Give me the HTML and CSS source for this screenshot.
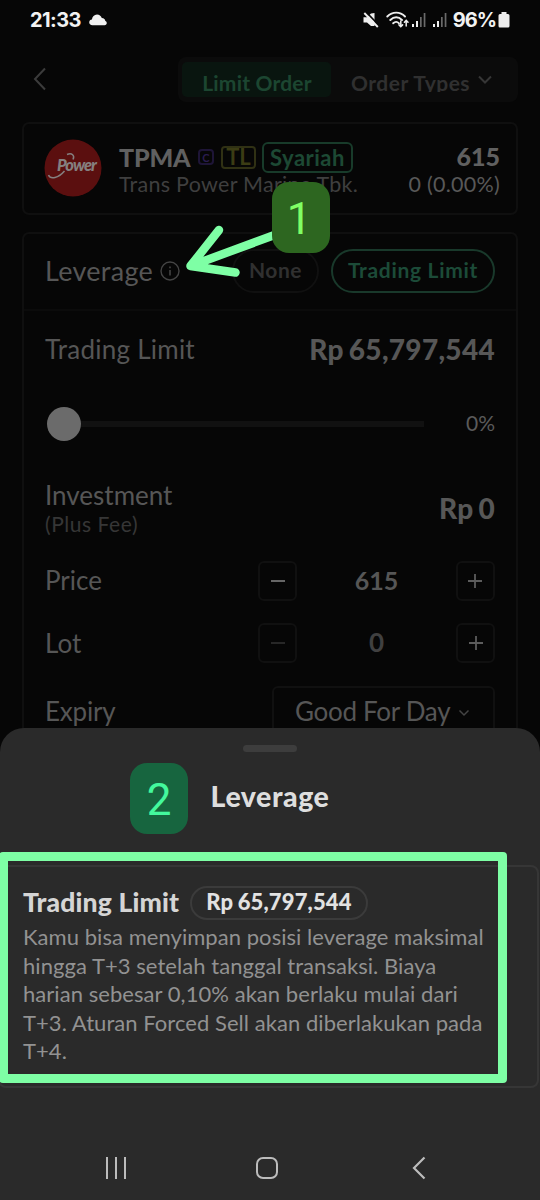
FILE: index.html
```html
<!DOCTYPE html>
<html lang="id">
<head>
<meta charset="utf-8">
<title>Leverage</title>
<link rel="stylesheet" href="styles.css">
</head>
<body>
<div class="phone">
  <header class="status">
    <span class="time">21:33</span>
    <svg class="cloud" width="18" height="12" viewBox="0 0 18 12"><path d="M3.500 11.200C1.300 11.200.2 9.900.2 8.300.2 6.700 1.400 5.600 2.900 5.500 3.300 2.800 5.200.6 8 .6c2.300 0 4 1.300 4.800 3.300C15 4 16.200 5.200 16.300 7c.9.300 1.500 1.100 1.500 2.100 0 1.200-.9 2.100-2.200 2.100z" fill="#f0f0f0"/></svg>
    <div class="signals">
      <svg width="16" height="16" viewBox="0 0 16 16"><path d="M.5 5.200H4l4-3.700 3.500-.5v13L8 14l-4-3.500H.5z" fill="#eee"/><path d="M3.500.5l12.500 13" stroke="#060606" stroke-width="1.800"/><path d="M1.300 1l13.500 14" stroke="#eee" stroke-width="1.900"/></svg>
      <svg class="wifi" width="24" height="18" viewBox="0 0 24 18" fill="none" stroke="#eee" stroke-width="1.900" stroke-linecap="round"><path d="M1.300 5.500C6.500.3 14 .3 19 5.500M4.300 9C8 5.400 12.500 5.400 16 9M7.200 12.300c2-1.900 4-1.900 5.800 0"/><path d="M14.800 10v5.500m-1.800-1.600 1.800 1.800 1.800-1.800M20.200 15V9.500m-1.800 1.700 1.800-1.800 1.800 1.800" stroke-width="1.500"/></svg>
      <svg class="bars" width="15" height="16" viewBox="0 0 15 16"><path d="M1 12h2v3H1zM5 9h2v6H5z" fill="#eee"/><path d="M9 5h1.700v10H9zM12.700 1h1.700v14h-1.700z" fill="#6a6a6a"/></svg>
      <svg class="bars second" width="15" height="16" viewBox="0 0 15 16"><path d="M1 12h2v3H1zM5 9h2v6H5z" fill="#eee"/><path d="M9 5h1.700v10H9zM12.700 1h1.700v14h-1.700z" fill="#6a6a6a"/></svg>
      <span class="percent">96%</span>
      <svg class="battery" width="12" height="16" viewBox="0 0 12 16"><path d="M3.500 0h5v2H10q1.500 0 1.500 1.500v10.500q0 1.500-1.500 1.500H2Q.5 15.500.5 14V3.500Q.5 2 2 2h1.500z" fill="#eee"/></svg>
    </div>
  </header>

  <nav class="topbar">
    <svg class="back" width="14" height="24" viewBox="0 0 14 24" fill="none" stroke="#3b3b3b" stroke-width="2"><path d="M12 1.500 2 12l10 10.500"/></svg>
    <div class="tabs">
      <div class="tab active"><span>Limit Order</span></div>
      <div class="tab"><span class="types">Order Types</span><svg width="14" height="9" viewBox="0 0 14 9" fill="none" stroke="#363636" stroke-width="2"><path d="M1 1.500 7 7.500l6-6"/></svg></div>
    </div>
  </nav>

  <section class="card stock">
    <svg class="logo" width="58" height="58" viewBox="0 0 58 58">
      <circle cx="29" cy="29" r="28.500" fill="#5b0f0f"/>
      <text class="logo-text" x="13" y="32" textLength="40">Power</text>
      <path d="M4.500 36c2 5 10 3 16-4M23 15.500c5-2 8 1 6 5" fill="none" stroke="#858080" stroke-width="1.500"/>
    </svg>
    <div class="names">
      <div class="name-row"><span class="ticker">TPMA</span><span class="tag c">C</span><span class="tag tl">TL</span><span class="tag syariah">Syariah</span></div>
      <div class="company">Trans Power Marine Tbk.</div>
    </div>
    <div class="quote"><div class="last">615</div><div class="change">0 (0.00%)</div></div>
  </section>

  <section class="card order">
    <div class="row leverage">
      <span class="label lev">Leverage</span>
      <svg class="info" width="20" height="20" viewBox="0 0 20 20" fill="none" stroke="#444"><circle cx="10" cy="10" r="9" stroke-width="1.400"/><path d="M10 9v5.500M10 5.500v1.800" stroke-width="1.600"/></svg>
      <span class="pill none">None</span>
      <span class="pill chosen">Trading Limit</span>
    </div>
    <div class="row limit"><span class="label tlim">Trading Limit</span><span class="amount">Rp 65,797,544</span></div>
    <div class="row slider"><i class="thumb"></i><i class="track"></i><span>0%</span></div>
    <div class="row invest"><div><div class="label">Investment</div><div class="fee">(Plus Fee)</div></div><span class="amount zero">Rp 0</span></div>
    <div class="row price"><span class="label">Price</span>
      <div class="stepper"><span class="btn"><svg width="14" height="14" viewBox="0 0 14 14"><path d="M0 7h14" stroke="#666" stroke-width="2"/></svg></span><b>615</b><span class="btn"><svg width="14" height="14" viewBox="0 0 14 14"><path d="M0 7h14M7 0v14" stroke="#5c5c5c" stroke-width="1.800"/></svg></span></div></div>
    <div class="row lot"><span class="label">Lot</span>
      <div class="stepper"><span class="btn"><svg width="14" height="14" viewBox="0 0 14 14"><path d="M0 7h14" stroke="#272727" stroke-width="2"/></svg></span><b class="dim">0</b><span class="btn"><svg width="14" height="14" viewBox="0 0 14 14"><path d="M0 7h14M7 0v14" stroke="#5c5c5c" stroke-width="1.800"/></svg></span></div></div>
    <div class="row expiry"><span class="label exp">Expiry</span>
      <div class="select"><span>Good For Day</span><svg width="12" height="8" viewBox="0 0 12 8" fill="none" stroke="#444" stroke-width="1.500"><path d="m1.500 1.500 4.500 4.500 4.500-4.500"/></svg></div></div>
  </section>

  <section class="sheet">
    <i class="handle"></i>
    <h1>Leverage</h1>
    <article class="detail">
      <div class="heading"><h2>Trading Limit</h2><span class="value">Rp 65,797,544</span></div>
      <p>Kamu bisa menyimpan posisi leverage maksimal<br>hingga T+3 setelah tanggal transaksi. Biaya<br>harian sebesar 0,10% akan berlaku mulai dari<br>T+3. Aturan Forced Sell akan diberlakukan pada<br>T+4.</p>
    </article>
    <footer class="sysnav">
      <svg width="22" height="22" viewBox="0 0 22 22" stroke="#bcbcbc" stroke-width="2"><path d="M2 0v22M11 0v22M20 0v22"/></svg>
      <svg class="home" width="22" height="22" viewBox="0 0 22 22" fill="none" stroke="#bcbcbc" stroke-width="2"><rect x="1" y="1" width="20" height="20" rx="6"/></svg>
      <svg width="14" height="24" viewBox="0 0 14 24" fill="none" stroke="#bcbcbc" stroke-width="2.200"><path d="M12.500 1.500 2 12l10.500 10.500"/></svg>
    </footer>
  </section>

  <svg class="arrow" width="110" height="60" viewBox="0 0 110 60" fill="none" stroke="#7effa5" stroke-width="8.500" stroke-linecap="round" stroke-linejoin="round"><path d="M100 8 10.500 41M39 5 10.500 41l45 6.500"/></svg>
  <div class="step one">1</div>
  <div class="step two">2</div>
  <div class="highlight"></div>
</div>
</body>
</html>
```
FILE: styles.css
```css
* { box-sizing: border-box; }
body { margin: 0; background: #060606; font-family: Lato, "Open Sans", sans-serif; }
svg { display: block; flex: none; }
.phone { position: relative; width: 540px; height: 1200px; overflow: hidden; background: #060606; display: flex; flex-direction: column; }

.status { height: 40px; flex: none; display: flex; align-items: center; padding: 0 30px; color: #f2f2f2; font: 700 20px Inter, sans-serif; }
.time { width: 53px; letter-spacing: -.55px; }
.cloud { margin-left: 6px; }
.signals { margin-left: auto; display: flex; align-items: center; }
.wifi { margin-left: 7px; }
.bars { margin-left: 1px; }
.second { margin-left: 6px; }
.percent { margin-left: 6px; letter-spacing: -1px; }
.battery { margin-left: 2px; }

.topbar { height: 82px; flex: none; display: flex; padding: 17px 22px 0 33px; }
.back { margin-top: 10px; }
.tabs { margin-left: auto; height: 45px; width: 340px; padding: 5px 4px; background: #0b0b0b; border-radius: 8px; display: flex; }
.tab { height: 30px; overflow: hidden; font-size: 21px; font-weight: 700; line-height: 42px; color: #303030; display: flex; white-space: nowrap; letter-spacing: .2px; }
.active { width: 149px; height: 35px; background: #09150f; color: #1c4631; border-radius: 5px; justify-content: center; padding-left: 1px; }
.tab .types { margin-left: 20px; letter-spacing: .5px; }
.tab svg { margin: 13px 0 0 8px; }

.card { margin: 0 22px; border: 2px solid #0f0f0f; border-radius: 7px; }
.stock { height: 93px; flex: none; display: flex; padding: 15px 16px 0 20px; }
.logo-text { font: italic 900 16.500px Lato, sans-serif; fill: #858080; }
.names { margin-left: 17px; width: 245px; white-space: nowrap; }
.name-row { display: flex; align-items: center; height: 36px; }
.ticker { color: #606060; font-size: 25px; font-weight: 900; letter-spacing: -.2px; width: 79px; margin-top: -1px; }
.tag { border: 2px solid; border-radius: 4px; display: flex; justify-content: center; align-items: center; font-weight: 700; }
.c { width: 16px; height: 16px; font-size: 11px; color: #2a1c50; border-color: #1e1537; }
.tl { width: 35px; height: 23px; margin-left: 7px; font-size: 22px; color: #3b3c14; border-color: #303114; line-height: 20px; }
.syariah { width: 91px; height: 31px; margin-left: 6px; font-size: 22px; letter-spacing: .5px; color: #1d4934; border-color: #183b2a; border-radius: 6px; }
.company, .change { color: #3f3f3f; font-size: 21.500px; line-height: 26px; margin-top: -4px; letter-spacing: .27px; }
.quote { margin-left: auto; text-align: right; white-space: nowrap; }
.last { color: #606060; font-size: 25px; font-weight: 900; height: 36px; line-height: 35px; }
.change { color: #585858; }

.order { margin-top: 17px; height: 520px; flex: none; padding: 0; }
.row { display: flex; align-items: center; padding: 0 21px; }
.label { color: #565656; font-size: 26px; line-height: 31px; white-space: nowrap; }
.lev { font-size: 27px; letter-spacing: .3px; width: 115px; margin-top: -1px; }
.tlim { letter-spacing: .25px; }
.exp { letter-spacing: -.2px; margin-top: -2px; }
.leverage { height: 77px; border-bottom: 2px solid #0b0b0b; padding-bottom: 2px; }
.pill { height: 44px; border: 2px solid #101010; border-radius: 22px; display: flex; justify-content: center; align-items: center; font-size: 21px; font-weight: 700; white-space: nowrap; padding-bottom: 2px; }
.none { margin-left: 52px; width: 87px; color: #303030; letter-spacing: .5px; }
.chosen { margin-left: 12px; width: 164px; color: #1c4b38; border-color: #19392b; letter-spacing: .7px; }
.limit { height: 78px; justify-content: space-between; padding-bottom: 1px; }
.amount { color: #575757; font-size: 28px; font-weight: 900; letter-spacing: .3px; word-spacing: -2px; white-space: nowrap; margin-top: -1px; }
.slider { height: 70px; padding-left: 23px; }
.thumb { width: 34px; height: 34px; border-radius: 50%; background: #6b6b6b; }
.track { width: 343px; height: 6px; background: #111; }
.slider span { margin-left: auto; color: #5a5a5a; font-size: 21px; padding-bottom: 3px; }
.invest { height: 90px; justify-content: space-between; }
.invest .label { line-height: 30px; margin-top: 10px; }
.fee { color: #363636; font-size: 21px; line-height: 28px; letter-spacing: .55px; }
.zero { margin-top: 8px; }
.price { height: 63px; }
.lot { height: 62px; }
.price, .lot, .expiry { justify-content: space-between; }
.stepper { width: 237px; display: flex; align-items: center; justify-content: space-between; color: #565656; font-size: 25px; }
.stepper b { margin-top: -2px; }
.stepper .dim { color: #404040; font-size: 26px; }
.btn { width: 39px; height: 40px; border: 2px solid #101010; border-radius: 6px; display: grid; place-items: center; }
.expiry { height: 76px; }
.select { width: 223px; height: 53px; border: 2px solid #101010; border-radius: 6px; display: flex; align-items: center; padding: 0 0 2px 21px; color: #565656; font-size: 26px; letter-spacing: -.3px; white-space: nowrap; }
.select svg { margin: 4px 0 0 8px; }

.sheet { position: absolute; left: 0; top: 728px; width: 540px; height: 472px; background: #2a2a2a; border-radius: 24px 24px 0 0; display: flex; flex-direction: column; }
.handle { width: 54px; height: 7px; margin: 17px auto 0; border-radius: 4px; background: #3d3d3d; flex: none; }
h1 { margin: 27px 0 0; text-align: center; color: #dedede; font-size: 28.500px; line-height: 34px; font-weight: 900; letter-spacing: .55px; }
.detail { margin: 52px 1px 0 -2px; height: 223px; flex: none; border: 2px solid #363636; border-radius: 8px; padding: 19px 0 0 23px; }
.heading { display: flex; align-items: center; height: 35px; }
h2 { margin: -3px 0 0; width: 167px; color: #d5d5d5; font-size: 26.500px; font-weight: 900; letter-spacing: .15px; white-space: nowrap; }
.value { width: 178px; height: 34px; border: 2px solid #3b3b3b; border-radius: 18px; display: flex; justify-content: center; align-items: center; color: #e2e2e2; font-size: 22px; font-weight: 900; letter-spacing: .15px; word-spacing: -1px; padding-bottom: 2px; margin-top: -2px; }
.detail p { margin: 2px 0 0; color: #929292; font-size: 22px; line-height: 28.500px; letter-spacing: .05px; white-space: nowrap; }
.sysnav { display: flex; justify-content: space-between; align-items: center; padding: 0 114px 0 105px; height: 24px; margin-top: 68px; }
.home { margin-right: 6px; }

.arrow { position: absolute; left: 180px; top: 225px; }
.step { position: absolute; width: 58px; height: 71px; border-radius: 17px; display: grid; place-items: center; font: 400 44px Roboto, sans-serif; padding-top: 3px; }
.one { left: 272px; top: 182px; background: #2d6620; color: #80ff65; padding-right: 4px; }
.two { left: 130px; top: 763px; background: #17653f; color: #43f99d; }
.highlight { position: absolute; left: -1px; top: 852px; width: 508px; height: 231px; border: 9px solid #7effa5; border-radius: 4px; }
```
